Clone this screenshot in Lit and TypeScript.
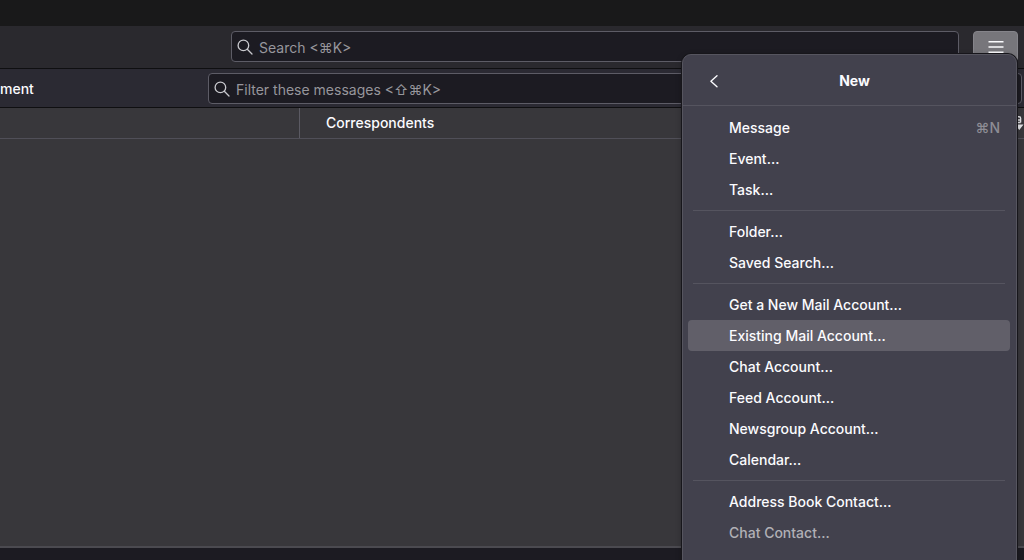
import { LitElement, html, css, svg, nothing } from "lit";
import { customElement, property } from "lit/decorators.js";

interface MenuEntry {
  label: string;
  shortcut?: string;
  disabled?: boolean;
  active?: boolean;
}

const GROUPS: MenuEntry[][] = [
  [{ label: "Message", shortcut: "⌘N" }, { label: "Event…" }, { label: "Task…" }],
  [{ label: "Folder…" }, { label: "Saved Search…" }],
  [
    { label: "Get a New Mail Account…" },
    { label: "Existing Mail Account…", active: true },
    { label: "Chat Account…" },
    { label: "Feed Account…" },
    { label: "Newsgroup Account…" },
    { label: "Calendar…" },
  ],
  [{ label: "Address Book Contact…" }, { label: "Chat Contact…", disabled: true }],
];

@customElement("search-field")
export class SearchField extends LitElement {
  @property() placeholder = "";

  static styles = css`
    :host {
      display: block;
      min-width: 0;
    }
    .field {
      display: flex;
      align-items: center;
      gap: 6px;
      height: 31px;
      padding: 0 5px;
      box-sizing: border-box;
      border: 1px solid #5d5c66;
      border-radius: 4px;
      background: #1c1b22;
    }
    .icon {
      flex: none;
      width: 16px;
      height: 16px;
      fill: none;
      stroke: #c9c9ce;
      stroke-width: 1.3;
      stroke-linecap: round;
    }
    .input {
      flex: 1;
      min-width: 0;
      padding: 2px 0 0;
      border: 0;
      outline: 0;
      background: none;
      color: #fbfbfe;
      font: 400 14px/20px Inter, "Noto Sans", sans-serif;
    }
    .input::placeholder {
      color: #97969c;
      opacity: 1;
    }
  `;

  render() {
    return html`<label class="field">
      <svg class="icon" viewBox="0 0 16 16" aria-hidden="true">
        ${svg`<circle cx="6.4" cy="6.4" r="5.3"></circle><path d="M10.3 10.3 15 15"></path>`}
      </svg>
      <input class="input" type="search" aria-label=${this.placeholder} placeholder=${this.placeholder} />
    </label>`;
  }
}

@customElement("app-menu")
export class AppMenu extends LitElement {
  static styles = css`
    :host {
      display: block;
      box-sizing: border-box;
      border: 1px solid #56555f;
      border-radius: 9px;
      background: #42414d;
      box-shadow: 0 0 0 1px #17161b, 0 2px 6px rgba(0, 0, 0, 0.3);
      color: #fbfbfe;
      font: 500 14px/20px Inter, "Noto Sans", sans-serif;
    }
    .head {
      display: grid;
      grid-template-columns: 40px 1fr 40px;
      align-items: center;
      height: 51px;
      padding: 2px 11px 0;
      box-sizing: border-box;
      border-bottom: 1px solid #55545f;
    }
    .title {
      margin: 0;
      padding-left: 10px;
      font-size: 14px;
      font-weight: 700;
      text-align: center;
    }
    .back {
      display: grid;
      place-items: center;
      height: 30px;
      padding: 0;
      border: 0;
      background: none;
      color: inherit;
    }
    .chevron {
      width: 16px;
      height: 16px;
      fill: none;
      stroke: currentColor;
      stroke-width: 1.4;
      stroke-linecap: round;
      stroke-linejoin: round;
    }
    .list {
      padding: 6px 6px 6px 5px;
    }
    .item {
      display: flex;
      align-items: center;
      justify-content: space-between;
      width: 100%;
      height: 31px;
      padding: 0 10px 0 41px;
      border: 0;
      border-radius: 4px;
      background: none;
      color: inherit;
      font: inherit;
      text-align: left;
    }
    .item.active {
      background: #615f69;
    }
    .item:disabled {
      color: #b1b0b6;
    }
    .shortcut {
      color: #8e8d95;
    }
    .separator {
      height: 1px;
      margin: 5px;
      border: 0;
      background: #55545f;
    }
  `;

  render() {
    return html`
      <header class="head">
        <button class="back" aria-label="Back">
          <svg class="chevron" viewBox="0 0 16 16" aria-hidden="true">
            ${svg`<path d="M11 2.8 4.9 8.2 11 13.8"></path>`}
          </svg>
        </button>
        <h1 class="title">New</h1>
      </header>
      <div class="list">
        ${GROUPS.map(
          (group, i) => html`
            ${i ? html`<hr class="separator" />` : nothing}
            ${group.map(
              (e) => html`<button class="item ${e.active ? "active" : ""}" ?disabled=${e.disabled}>
                <span>${e.label}</span>
                ${e.shortcut ? html`<span class="shortcut">${e.shortcut}</span>` : nothing}
              </button>`
            )}
          `
        )}
      </div>
    `;
  }
}

@customElement("app-root")
export class AppRoot extends LitElement {
  static styles = css`
    :host {
      position: relative;
      display: flex;
      flex-direction: column;
      height: 100vh;
      overflow: hidden;
      background: #38373b;
      color: #fbfbfe;
      font: 500 14px/20px Inter, "Noto Sans", sans-serif;
    }
    .titlebar {
      flex: none;
      height: 26px;
      background: #19191a;
    }
    .toolbar {
      flex: none;
      display: flex;
      align-items: flex-start;
      gap: 14px;
      height: 43px;
      padding: 5px 6px 0 231px;
      box-sizing: border-box;
      background: #2a292e;
      border-bottom: 1px solid #0f0f11;
    }
    .grow {
      flex: 1;
    }
    .menu-button {
      display: grid;
      place-items: center;
      width: 45px;
      height: 31px;
      padding: 0;
      border: 1px solid #85848a;
      border-radius: 4px;
      background: #77767b;
      color: #fbfbfe;
    }
    .bars {
      width: 16px;
      height: 16px;
      fill: none;
      stroke: currentColor;
      stroke-width: 1.4;
    }
    .filterbar {
      flex: none;
      display: flex;
      align-items: center;
      height: 39px;
      padding: 1px 2px 0 0;
      box-sizing: border-box;
      background: #2b2a33;
      border-bottom: 1px solid #0f0f11;
    }
    .filter-toggle {
      width: 208px;
      padding: 0;
      border: 0;
      background: none;
      color: inherit;
      font: inherit;
      text-align: left;
    }
    .columns {
      flex: none;
      display: flex;
      align-items: stretch;
      height: 30px;
      border-bottom: 1px solid #504f58;
    }
    .column {
      display: flex;
      align-items: center;
      padding: 0 26px;
    }
    .subject {
      width: 299px;
      padding: 0;
      border-right: 1px solid #5b5a63;
    }
    .picker {
      display: grid;
      place-items: center;
      padding: 0;
      border: 0;
      background: none;
      color: #e4e4e8;
    }
    .picker-icon {
      width: 14px;
      height: 16px;
      fill: none;
      stroke: currentColor;
      stroke-width: 1.4;
    }
    .solid {
      fill: currentColor;
      stroke: none;
    }
    .messages {
      flex: 1;
    }
    .statusbar {
      flex: none;
      height: 12px;
      background: #1c1b22;
      border-top: 2px solid #4b4a50;
    }
    .popup {
      position: absolute;
      top: 54px;
      right: 7px;
      width: 335px;
      min-height: 520px;
    }
  `;

  render() {
    return html`
      <div class="titlebar"></div>
      <div class="toolbar">
        <search-field class="grow" placeholder="Search <⌘K>"></search-field>
        <button class="menu-button" aria-label="Application menu">
          <svg class="bars" viewBox="0 0 16 16" aria-hidden="true">
            ${svg`<path d="M0.5 2.8h15M0.5 8h15M0.5 13.2h15"></path>`}
          </svg>
        </button>
      </div>
      <div class="filterbar">
        <button class="filter-toggle">ment</button>
        <search-field class="grow" placeholder="Filter these messages <⇧⌘K>"></search-field>
      </div>
      <div class="columns">
        <div class="column subject"></div>
        <div class="column grow">Correspondents</div>
        <button class="picker" aria-label="Select columns to display">
          <svg class="picker-icon" viewBox="0 0 14 16" aria-hidden="true">
            ${svg`<path d="M2 7.5V1.7h7q1.6 0 1.6 1.6v4.2M6 5h4.6M6 7.5h4.6"></path><path class="solid" d="M5 9.5h8.5l-4.2 5.5z"></path>`}
          </svg>
        </button>
      </div>
      <main class="messages"></main>
      <footer class="statusbar"></footer>
      <app-menu class="popup"></app-menu>
    `;
  }
}
